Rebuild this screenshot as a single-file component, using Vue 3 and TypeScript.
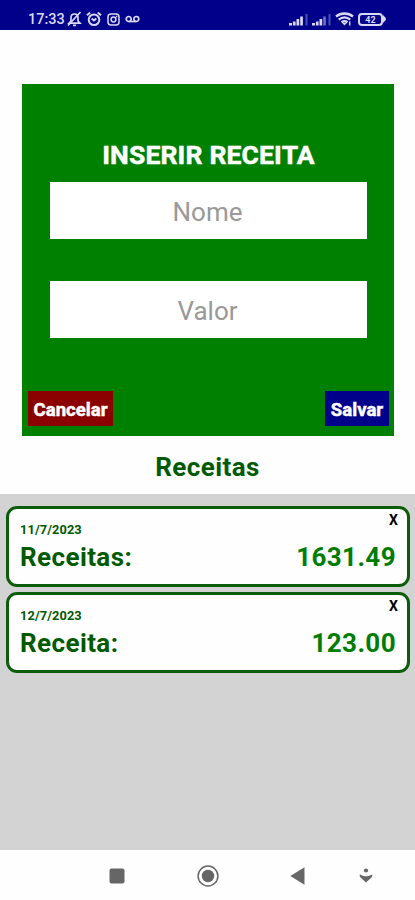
<script setup lang="ts">
import { ref } from 'vue'

interface Receita {
  id: number
  data: string
  nome: string
  valor: number
}

const nome = ref('')
const valor = ref('')
const receitas = ref<Receita[]>([
  { id: 1, data: '11/7/2023', nome: 'Receitas', valor: 1631.49 },
  { id: 2, data: '12/7/2023', nome: 'Receita', valor: 123 },
])

function limpar(): void {
  nome.value = ''
  valor.value = ''
}

function salvar(): void {
  const quantia = Number(valor.value)
  if (!nome.value || Number.isNaN(quantia)) return
  receitas.value.push({
    id: Date.now(),
    data: new Date().toLocaleDateString('pt-BR'),
    nome: nome.value,
    valor: quantia,
  })
  limpar()
}

function remover(id: number): void {
  receitas.value = receitas.value.filter((r) => r.id !== id)
}
</script>

<template>
  <div class="screen">
    <header class="status">
      <div class="status-left">
        <span class="clock">17:33</span>
        <svg class="bell" width="15" height="16" viewBox="0 0 15 16" fill="none" stroke="currentColor" stroke-width="1.700">
          <path d="M2 12.200 4 10V6.500C4 4.500 5.500 3 7.500 3S11 4.500 11 6.500V10l2 2.200Z" />
          <path d="M6 14.300h3M13.500 1 1 14.500" />
        </svg>
        <svg class="alarm" width="16" height="16" viewBox="0 0 16 16" fill="none" stroke="currentColor" stroke-width="2">
          <circle cx="8" cy="8.700" r="5.300" />
          <path d="M1 4.200 4.200 1.500M15 4.200l-3.200-2.700M5.700 7.500 8 9.500l2.300-2" />
        </svg>
        <svg class="insta" width="13" height="13" viewBox="0 0 13 13" fill="none" stroke="currentColor" stroke-width="1.500">
          <rect x="1" y="1" width="11" height="11" rx="3" />
          <circle cx="6.500" cy="6.500" r="2.400" />
          <path d="M9 3.500h1.300" />
        </svg>
        <svg class="voicemail" width="15" height="8" viewBox="0 0 15 8" fill="none" stroke="currentColor" stroke-width="1.700">
          <circle cx="3.700" cy="4" r="2.500" />
          <circle cx="11.300" cy="4" r="2.500" />
          <path d="M3.700 6.500h7.600" />
        </svg>
      </div>
      <div class="status-right">
        <svg v-for="n in 2" :key="n" class="signal" width="20" height="13" viewBox="0 0 20 13" fill="currentColor">
          <path d="M0 10h3v2.500H0zM3.900 8.500h2.700v4H3.900zM7.500 6h2.700v6.500H7.500z" />
          <path :opacity="n === 1 ? 1 : 0.5" d="M11.200 3.500h2.700v9h-2.700z" />
          <path opacity="0.35" d="M16.500 1h2v11.500h-2z" />
        </svg>
        <svg class="wifi" width="19" height="14" viewBox="0 0 19 14" fill="none" stroke="currentColor" stroke-width="2.300">
          <path d="M1 4.500c5-4 12-4 17 0M3.700 7.600c3.500-2.700 8.100-2.700 11.600 0M6.500 10.300c2-1.400 4-1.400 6 0" />
          <path d="m7.200 11 2.300 2.500 2.300-2.500Z" fill="currentColor" stroke="none" />
          <path d="M14.700 9.500v4" stroke-width="1.500" />
        </svg>
        <div class="battery">
          <span class="battery-level">42</span>
          <svg class="battery-tip" width="3" height="8" viewBox="0 0 3 8" fill="currentColor">
            <path d="M0 0 2.800 3v2L0 8Z" />
          </svg>
        </div>
      </div>
    </header>

    <form class="form" @submit.prevent="salvar">
      <h1 class="form-title">INSERIR RECEITA</h1>
      <input v-model="nome" class="field" type="text" placeholder="Nome" />
      <input v-model="valor" class="field" type="text" inputmode="decimal" placeholder="Valor" />
      <div class="actions">
        <button class="button cancel" type="button" @click="limpar">Cancelar</button>
        <button class="button save" type="submit">Salvar</button>
      </div>
    </form>

    <h2 class="heading">Receitas</h2>

    <main class="list">
      <article v-for="r in receitas" :key="r.id" class="card">
        <button class="remove" type="button" @click="remover(r.id)">X</button>
        <div class="date">{{ r.data }}</div>
        <div class="row">
          <span class="name">{{ r.nome }}:</span>
          <span class="amount">{{ r.valor.toFixed(2) }}</span>
        </div>
      </article>
    </main>

    <nav class="navbar">
      <svg class="nav-recent" width="16" height="16" viewBox="0 0 16 16">
        <rect x="0.500" y="0.500" width="15" height="15" rx="2" fill="currentColor" />
      </svg>
      <svg class="nav-home" width="22" height="22" viewBox="0 0 22 22">
        <circle cx="11" cy="11" r="9.900" fill="none" stroke="currentColor" stroke-width="1.500" />
        <circle cx="11" cy="11" r="6.200" fill="currentColor" />
      </svg>
      <svg class="nav-back" width="15" height="18" viewBox="0 0 15 18">
        <path d="M14.500 0.300v17.400L0.300 9Z" fill="currentColor" />
      </svg>
      <svg class="nav-down" width="14" height="15" viewBox="0 0 14 15">
        <circle cx="7" cy="2.500" r="2.100" fill="currentColor" />
        <path d="M0.800 6.300c4 2.700 8.400 2.700 12.400 0v2.500L7 14.500 0.800 8.800Z" fill="currentColor" />
      </svg>
    </nav>
  </div>
</template>

<style>
body {
  background: #fff;
}
</style>

<style scoped>
.screen {
  width: 415px;
  height: 900px;
  display: flex;
  flex-direction: column;
  overflow: hidden;
  font-family: Roboto, "Liberation Sans", sans-serif;
  background: #fefefe;
}

.screen * {
  box-sizing: border-box;
}

svg {
  display: block;
  flex: none;
}

.status {
  height: 30px;
  flex: none;
  display: flex;
  justify-content: space-between;
  padding: 8px 29px 0 28px;
  background: #00008b;
  color: #d9d9f6;
}

.status-left,
.status-right {
  height: 22px;
  display: flex;
  align-items: center;
}

.clock {
  width: 36px;
  padding-top: 1px;
  font-size: 14.5px;
  font-weight: 500;
  white-space: nowrap;
}

.bell {
  margin-left: 3px;
}

.alarm {
  margin-left: 4px;
}

.insta {
  margin-left: 5px;
}

.voicemail {
  margin-left: 5px;
}

.signal {
  margin-right: 3px;
}

.wifi {
  margin-right: 4px;
}

.battery {
  display: flex;
  align-items: center;
}

.battery-level {
  width: 25px;
  height: 13px;
  border: 2px solid currentColor;
  border-radius: 4px;
  font-size: 9px;
  line-height: 10px;
  font-weight: 700;
  text-align: center;
}

.form {
  width: 372px;
  height: 352px;
  flex: none;
  margin: 54px 0 0 22px;
  padding: 54px 5px 10px 6px;
  display: flex;
  flex-direction: column;
  background: #008000;
}

.form-title {
  margin: 0 0 10px;
  height: 34px;
  line-height: 34px;
  font-size: 26.5px;
  font-weight: 700;
  letter-spacing: 0.15px;
  text-align: center;
  color: #fff;
  -webkit-text-stroke: 0.5px #fff;
}

.field {
  width: 317px;
  height: 57px;
  flex: none;
  margin: 0 0 42px 22px;
  padding: 3px 2px 0 0;
  border: 0;
  border-radius: 0;
  background: #fff;
  color: #333;
  font: 400 26px/54px Roboto, "Liberation Sans", sans-serif;
  text-align: center;
}

.field::placeholder {
  color: #999;
  opacity: 1;
}

.actions {
  margin-top: auto;
  display: flex;
  justify-content: space-between;
}

.button {
  height: 35px;
  padding: 3px 0 0;
  border: 0;
  color: #fff;
  font: 700 18.6px/32px Roboto, "Liberation Sans", sans-serif;
  text-align: center;
  -webkit-text-stroke: 0.5px #fff;
}

.cancel {
  width: 85px;
  background: #8b0000;
}

.save {
  width: 64px;
  background: #00008b;
}

.heading {
  height: 58px;
  flex: none;
  margin: 0;
  padding-top: 2px;
  line-height: 58px;
  font-size: 26px;
  font-weight: 700;
  letter-spacing: 0.4px;
  text-align: center;
  color: #005a00;
}

.list {
  flex: 1;
  display: flex;
  flex-direction: column;
  gap: 5px;
  padding: 12px 5px 0 6px;
  background: #d3d3d3;
}

.card {
  position: relative;
  height: 81px;
  flex: none;
  padding: 13px 11px 0;
  border: 3px solid #0b5d0b;
  border-radius: 11px;
  background: #fefefe;
}

.remove {
  position: absolute;
  top: 3px;
  right: 9px;
  padding: 0;
  border: 0;
  background: none;
  color: #000;
  font: 700 14px/16px Roboto, "Liberation Sans", sans-serif;
}

.date {
  height: 16px;
  line-height: 16px;
  font-size: 12.8px;
  font-weight: 700;
  letter-spacing: 0.1px;
  color: #005a00;
}

.row {
  height: 36px;
  display: flex;
  justify-content: space-between;
  font-size: 26px;
  font-weight: 700;
  line-height: 38px;
  letter-spacing: 0.4px;
}

.name {
  color: #005a00;
}

.amount {
  color: #007d00;
}

.navbar {
  height: 50px;
  flex: none;
  display: flex;
  align-items: center;
  padding: 1px 0 0 109px;
  color: #666;
}

.nav-home {
  margin-left: 72px;
}

.nav-back {
  margin-left: 71px;
}

.nav-down {
  margin-left: 54px;
}
</style>
